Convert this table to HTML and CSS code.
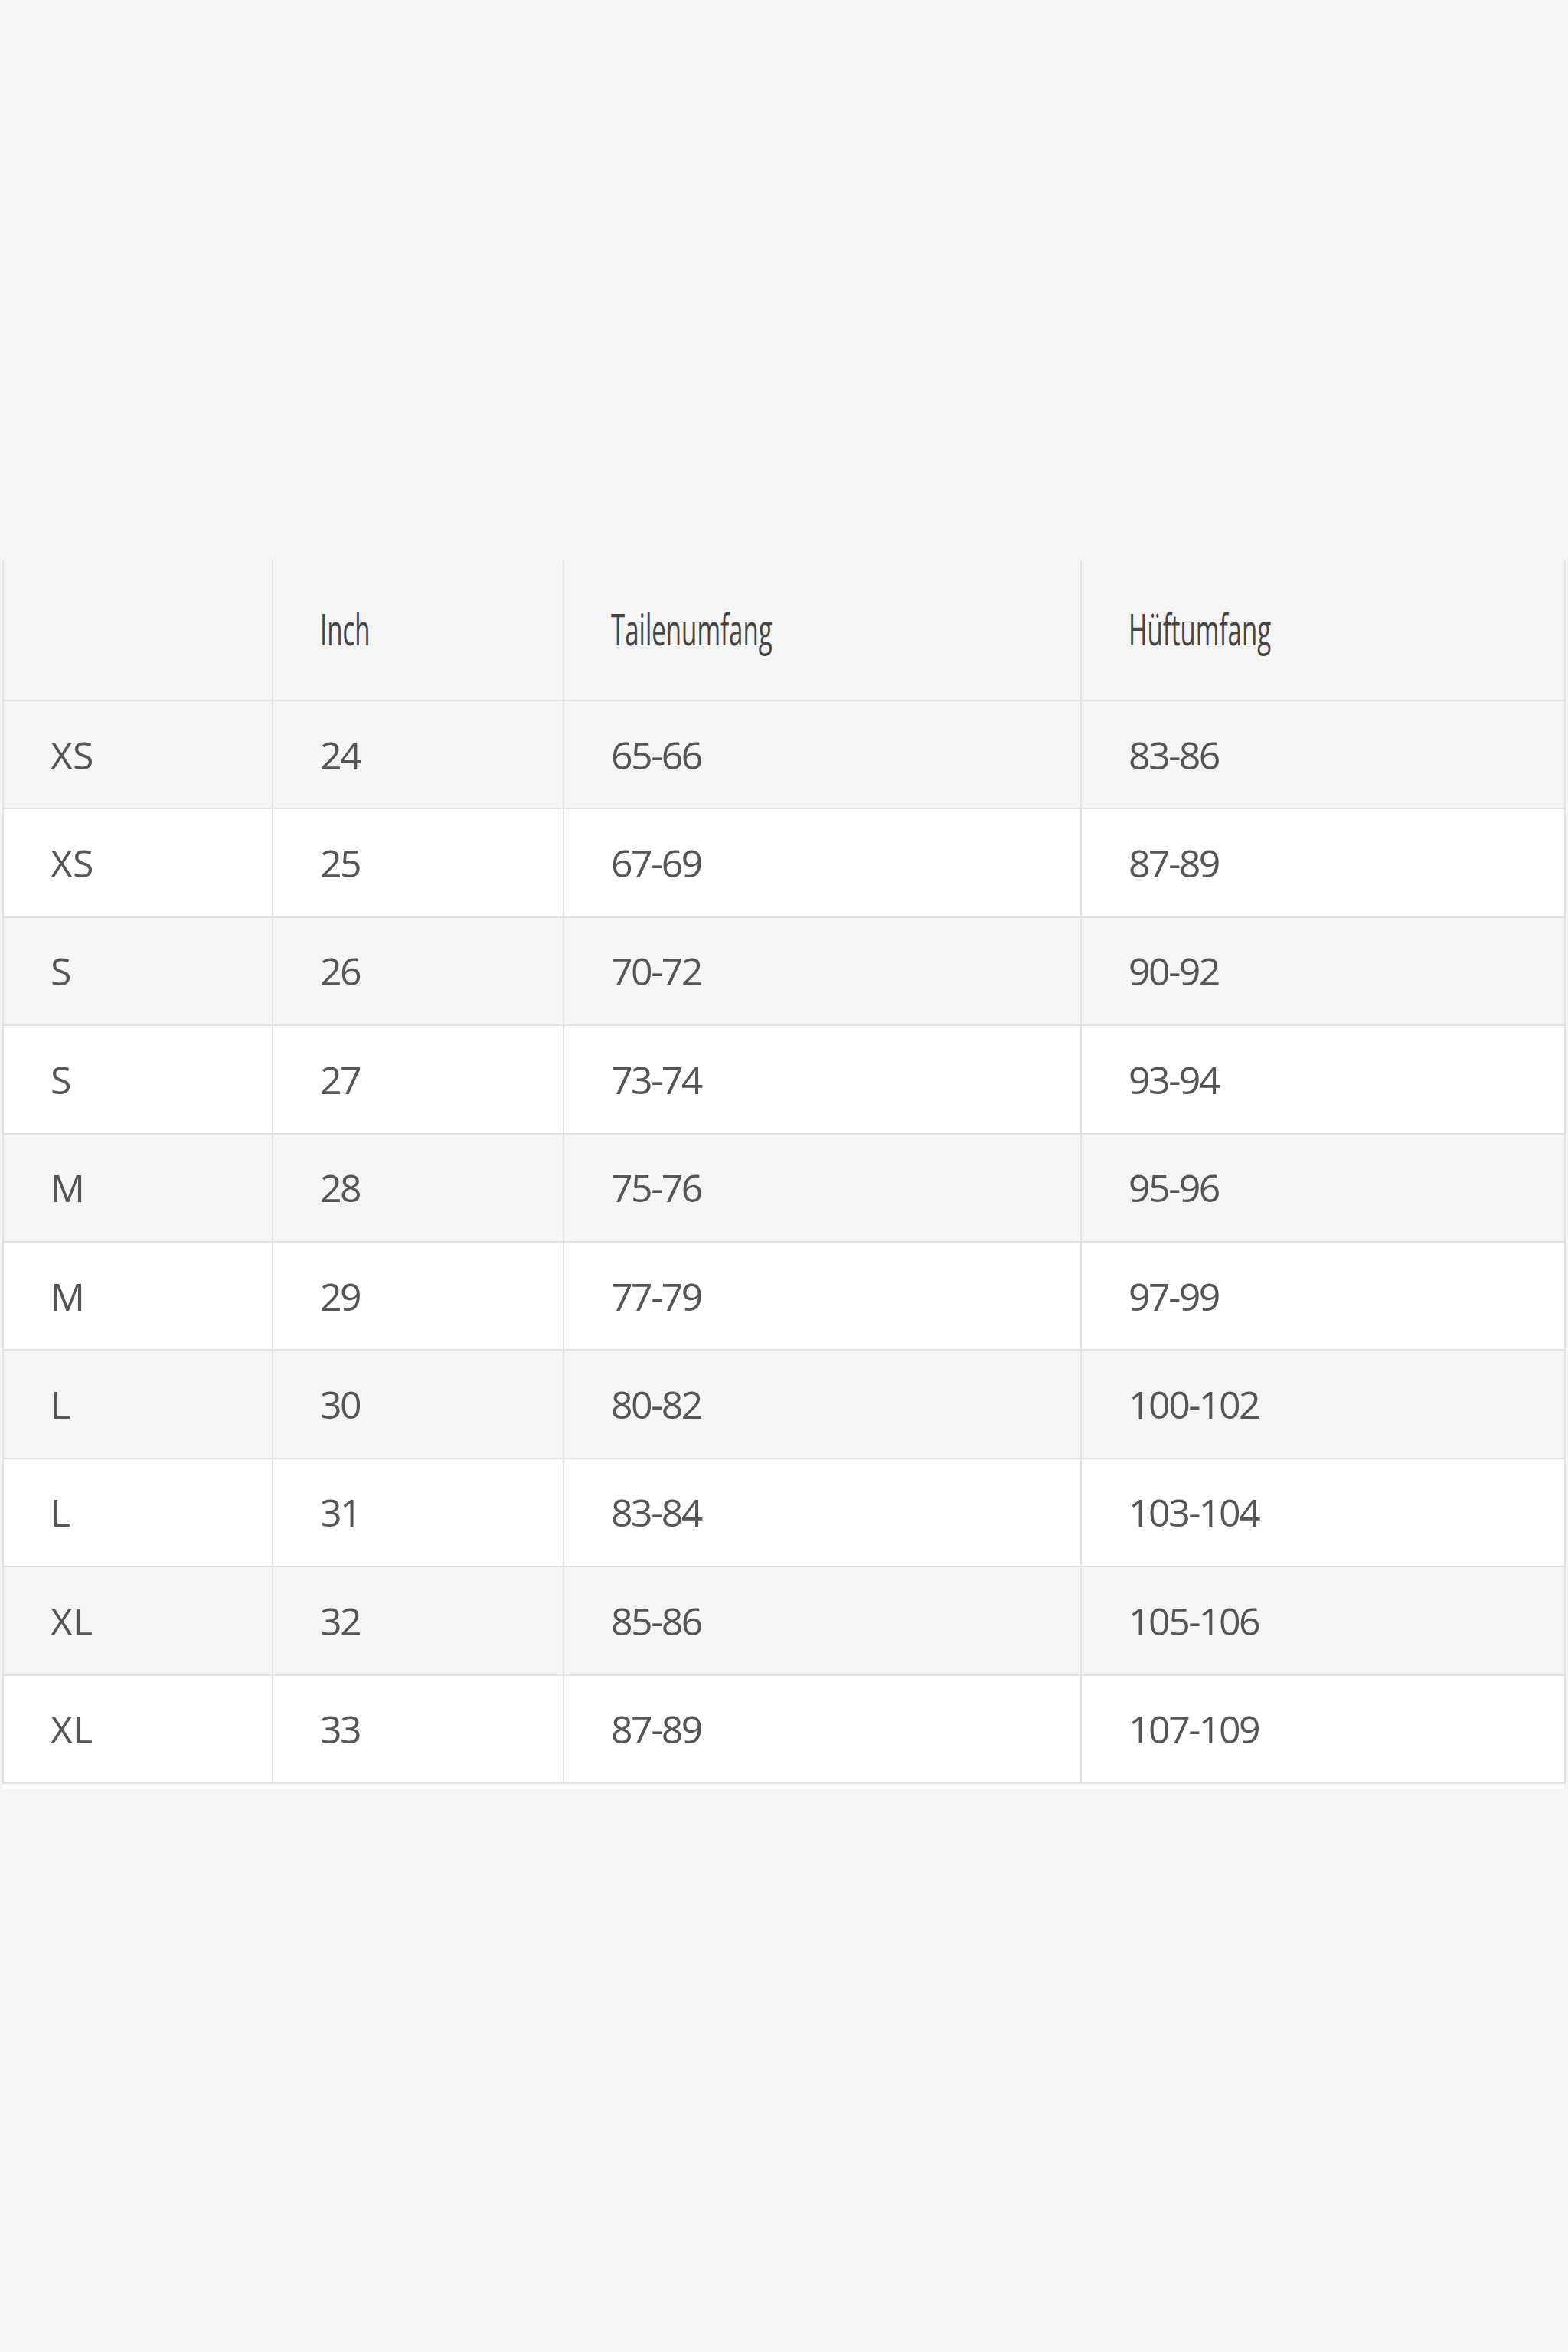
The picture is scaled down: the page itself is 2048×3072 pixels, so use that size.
FILE: index.html
```html
<!DOCTYPE html>
<html lang="de">
<head>
<meta charset="utf-8">
<title>Größentabelle</title>
<link rel="stylesheet" href="styles.css">
</head>
<body>
<div class="page">
  <div class="chart">
    <table class="size-table">
      <colgroup>
        <col class="c1"><col class="c2"><col class="c3"><col class="c4">
      </colgroup>
      <thead>
        <tr>
          <th></th>
          <th><span class="hd">Inch</span></th>
          <th><span class="hd">Tailenumfang</span></th>
          <th><span class="hd">Hüftumfang</span></th>
        </tr>
      </thead>
      <tbody>
        <tr><td>XS</td><td class="num">24</td><td class="num">65-66</td><td class="num">83-86</td></tr>
        <tr><td>XS</td><td class="num">25</td><td class="num">67-69</td><td class="num">87-89</td></tr>
        <tr><td>S</td><td class="num">26</td><td class="num">70-72</td><td class="num">90-92</td></tr>
        <tr><td>S</td><td class="num">27</td><td class="num">73-74</td><td class="num">93-94</td></tr>
        <tr><td>M</td><td class="num">28</td><td class="num">75-76</td><td class="num">95-96</td></tr>
        <tr><td>M</td><td class="num">29</td><td class="num">77-79</td><td class="num">97-99</td></tr>
        <tr><td>L</td><td class="num">30</td><td class="num">80-82</td><td class="num">100-102</td></tr>
        <tr><td>L</td><td class="num">31</td><td class="num">83-84</td><td class="num">103-104</td></tr>
        <tr><td>XL</td><td class="num">32</td><td class="num">85-86</td><td class="num">105-106</td></tr>
        <tr><td>XL</td><td class="num">33</td><td class="num">87-89</td><td class="num">107-109</td></tr>
      </tbody>
    </table>
    <div class="chart-foot"></div>
  </div>
</div>
</body>
</html>
```
FILE: styles.css
```css
html, body {
  margin: 0;
  padding: 0;
  background: #f5f5f5;
}

body {
  font-family: "Open Sans", "Liberation Sans", sans-serif;
  color: #555555;
  min-height: 3072px;
}

.page {
  padding: 732px 5px 0 3px;
}

.chart {
  width: 2040px;
}

.size-table {
  width: 2040px;
  border-collapse: collapse;
  table-layout: fixed;
}

.c1 { width: 352px; }
.c2 { width: 380px; }
.c3 { width: 676px; }
.c4 { width: 632px; }

.size-table th,
.size-table td {
  border: 2px solid #e2e2e2;
  padding: 0 0 0 61px;
  text-align: left;
  vertical-align: middle;
  line-height: 1;
}

.size-table thead th {
  border-top: none;
  height: 182px;
  font-weight: normal;
  font-size: 57px;
  color: #454545;
  background: #f5f5f5;
}

.hd {
  display: inline-block;
  transform: scaleX(0.58);
  transform-origin: left center;
  white-space: nowrap;
  position: relative;
  top: -2px;
}

.size-table td {
  height: 139.4px;
  font-size: 50px;
}

.size-table td.num {
  letter-spacing: -2.5px;
}

.size-table tbody tr:nth-child(odd) td {
  background: #f5f5f5;
}

.size-table tbody tr:nth-child(even) td {
  background: #ffffff;
}

.chart-foot {
  height: 7px;
  background: #ffffff;
}
```
